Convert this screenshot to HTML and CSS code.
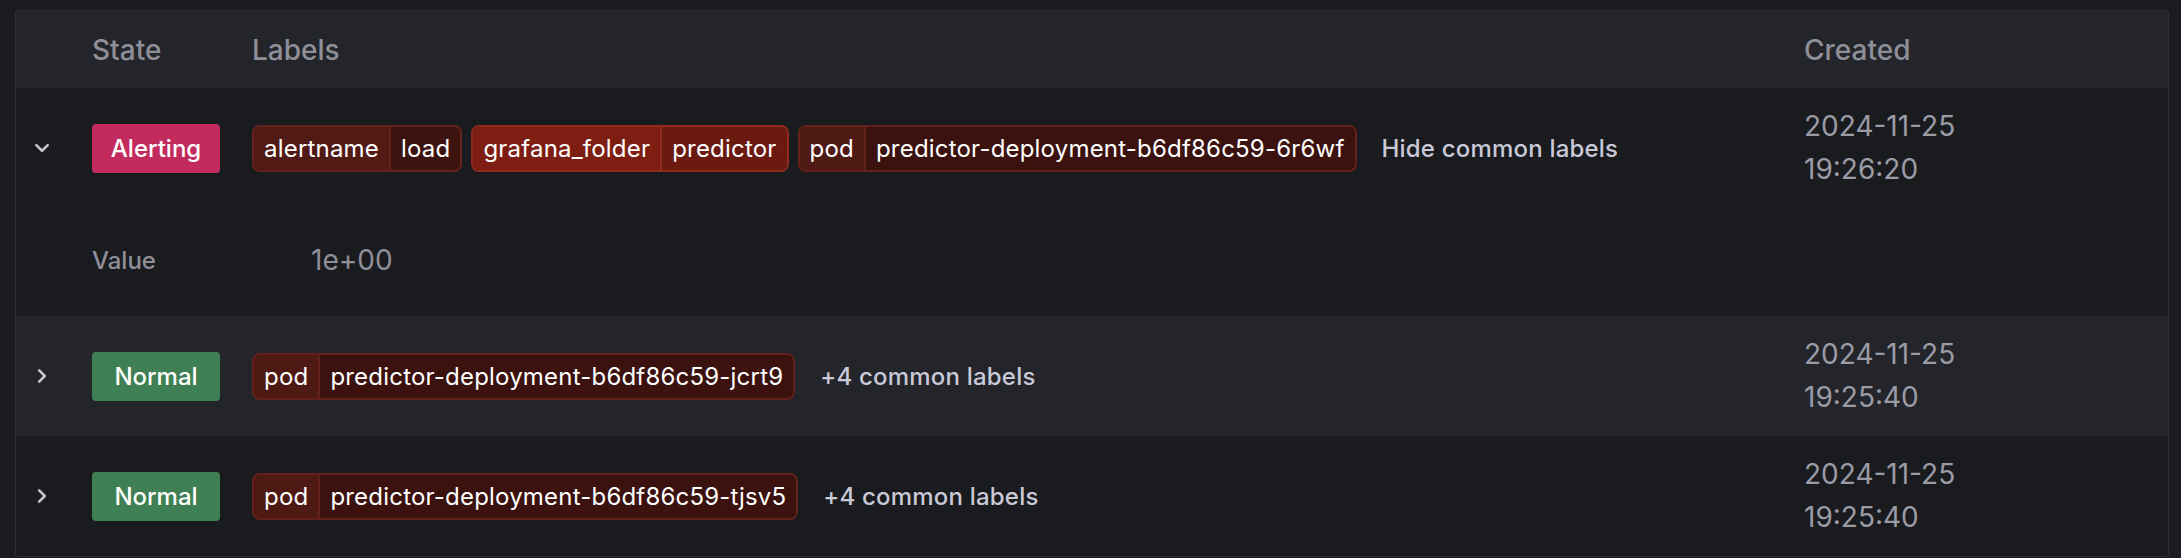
FILE: index.html
```html
<!DOCTYPE html>
<html>
<head>
<meta charset="utf-8">
<link rel="stylesheet" href="styles.css">
</head>
<body>
<div class="panel">
  <div class="row head">
    <div class="cell exp"></div>
    <div class="cell">State</div>
    <div class="cell">Labels</div>
    <div class="cell">Created</div>
  </div>

  <div class="group dark">
    <div class="row">
      <div class="cell exp">
        <svg class="chev" viewBox="0 0 24 24"><path d="M17,9.17a1,1,0,0,0-1.41,0L12,12.71,8.46,9.17a1,1,0,0,0-1.41,0,1,1,0,0,0,0,1.42l4.24,4.24a1,1,0,0,0,1.42,0L17,10.59A1,1,0,0,0,17,9.17Z"/></svg>
      </div>
      <div class="cell"><span class="badge alerting">Alerting</span></div>
      <div class="cell labels">
        <span class="chip c-alert"><span class="k">alertname</span><span class="v">load</span></span>
        <span class="chip c-folder"><span class="k">grafana_folder</span><span class="v">predictor</span></span>
        <span class="chip c-pod"><span class="k">pod</span><span class="v">predictor-deployment-b6df86c59-6r6wf</span></span>
        <span class="common">Hide common labels</span>
      </div>
      <div class="cell created"><span>2024-11-25</span><span>19:26:20</span></div>
    </div>
    <div class="details">
      <span class="d-label">Value</span>
      <span class="d-value">1e+00</span>
    </div>
  </div>

  <div class="row light">
    <div class="cell exp">
      <svg class="chev" viewBox="0 0 24 24"><path d="M14.83,11.29,10.59,7.05a1,1,0,0,0-1.42,0,1,1,0,0,0,0,1.41L12.71,12,9.17,15.54a1,1,0,0,0,0,1.41,1,1,0,0,0,.71.3,1,1,0,0,0,.71-.3l4.24-4.24A1,1,0,0,0,14.830,11.29Z"/></svg>
    </div>
    <div class="cell"><span class="badge normal">Normal</span></div>
    <div class="cell labels">
      <span class="chip c-pod"><span class="k">pod</span><span class="v">predictor-deployment-b6df86c59-jcrt9</span></span>
      <span class="common">+4 common labels</span>
    </div>
    <div class="cell created"><span>2024-11-25</span><span>19:25:40</span></div>
  </div>

  <div class="row dark">
    <div class="cell exp">
      <svg class="chev" viewBox="0 0 24 24"><path d="M14.83,11.29,10.59,7.05a1,1,0,0,0-1.42,0,1,1,0,0,0,0,1.41L12.71,12,9.17,15.54a1,1,0,0,0,0,1.41,1,1,0,0,0,.71.3,1,1,0,0,0,.71-.3l4.24-4.24A1,1,0,0,0,14.830,11.29Z"/></svg>
    </div>
    <div class="cell"><span class="badge normal">Normal</span></div>
    <div class="cell labels">
      <span class="chip c-pod"><span class="k">pod</span><span class="v">predictor-deployment-b6df86c59-tjsv5</span></span>
      <span class="common">+4 common labels</span>
    </div>
    <div class="cell created"><span>2024-11-25</span><span>19:25:40</span></div>
  </div>
</div>
</body>
</html>
```

FILE: styles.css
```css
* { box-sizing: border-box; }
html, body { margin: 0; }
body {
  background: #1b1c21;
  padding: 10px 12px 0 15px;
  font-family: Inter, "Noto Sans", sans-serif;
  color: #ccccdc;
}
.panel {
  border: 1px solid #2e2f35;
  border-radius: 3px;
  overflow: hidden;
  background: #1a1b1f;
}
.row {
  display: grid;
  grid-template-columns: 60px 160px 1fr 380px;
  align-items: center;
  height: 120px;
}
.head {
  height: 77px;
  background: #23252b;
  font-size: 28px;
  font-weight: 500;
  color: #8e8f99;
}
.dark { background: #1a1b1f; }
.light { background: #23252b; }
.cell {
  padding: 0 16px;
  display: flex;
  align-items: center;
}
.cell.exp { padding: 0 0 0 10px; }
.chev {
  width: 32px;
  height: 32px;
  fill: #c4c4d0;
}
.badge {
  width: 128px;
  height: 49px;
  border-radius: 4px;
  display: flex;
  align-items: center;
  justify-content: center;
  font-size: 24px;
  font-weight: 500;
  color: #ffffff;
}
.alerting { background: #c32b5e; }
.normal { background: #3e8053; }
.labels { gap: 9px; }
.chip {
  display: flex;
  height: 47px;
  border: 2px solid;
  border-radius: 8px;
  overflow: hidden;
  font-size: 24px;
  letter-spacing: 0.2px;
  color: #ffffff;
}
.chip .k, .chip .v {
  display: flex;
  align-items: center;
  padding: 0 10px;
}
.chip .v { border-left: 2px solid; }
.c-alert { border-color: #65221a; }
.c-alert .k { background: #521a15; }
.c-alert .v { background: #3d130f; border-color: #65221a; }
.c-folder { border-color: #912a1c; }
.c-folder .k { background: #7e1e13; }
.c-folder .v { background: #6b1a10; border-color: #912a1c; }
.c-pod { border-color: #63211a; }
.c-pod .k { background: #4f1a14; }
.c-pod .v { background: #3b120e; border-color: #63211a; }
.common {
  margin-left: 16px;
  font-size: 24px;
  font-weight: 500;
  letter-spacing: 0.2px;
  color: #c9c9d7;
}
.created {
  flex-direction: column;
  align-items: flex-start;
  font-size: 28px;
  line-height: 43px;
  color: #9b9ba6;
}
.details {
  display: flex;
  align-items: center;
  height: 108px;
  padding: 0 0 4px 76px;
  color: #8e8f99;
}
.d-label {
  width: 219px;
  font-size: 24px;
  font-weight: 500;
}
.d-value {
  font-size: 28px;
}
```
